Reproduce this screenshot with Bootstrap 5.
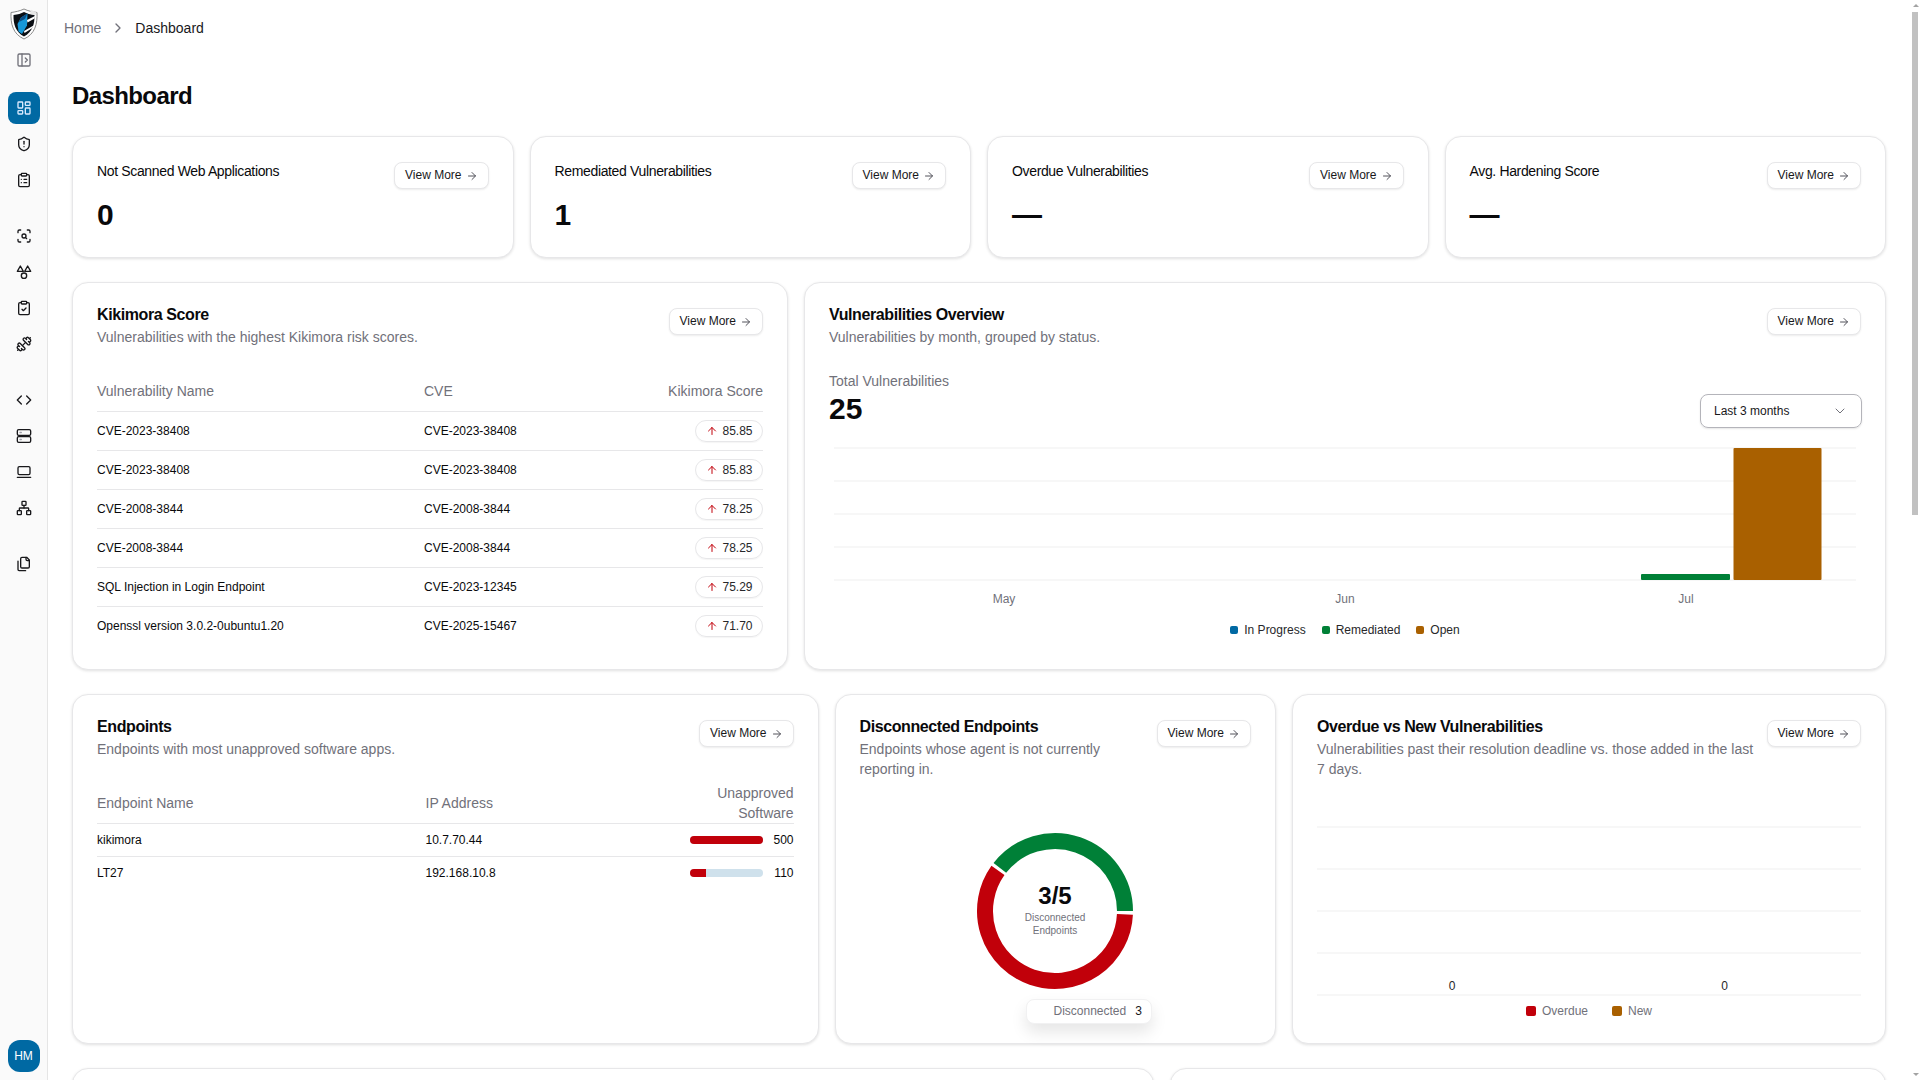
<!DOCTYPE html>
<html lang="en">
<head>
<meta charset="utf-8">
<title>Dashboard</title>
<link href="https://cdn.jsdelivr.net/npm/bootstrap@5.3.0/dist/css/bootstrap.min.css" rel="stylesheet">
<style>
html,body{height:100%;overflow:hidden}
body{font-family:"Liberation Sans",Arial,sans-serif;color:#09090b;background:#fff;font-size:14px;line-height:20px}
.ico{width:16px;height:16px;fill:none;stroke:currentColor;stroke-width:2;stroke-linecap:round;stroke-linejoin:round;flex:none}
.ico12{width:12px;height:12px}
.sidebar{width:48px;flex:none;background:#fafafa;border-right:1px solid #e5e5e5;height:100vh}
.logo{height:44px;padding-top:4px}
.nav-ico{width:32px;height:32px;color:#18181b;border-radius:8px}
.nav-ico.toggle{color:#71717a;margin-bottom:16px}
.nav-ico.active{background:#0069a3;color:#dbeafe}
.nav-group{margin-bottom:24px;gap:4px}
.avatar{width:32px;height:32px;background:#0069a3;color:#fff;font-size:12px;margin-bottom:8px;border-radius:12px}
.main{min-width:0;height:100vh;overflow:hidden;padding:0 19px 0 24px}
.crumbs{height:56px;margin-left:-8px;gap:9px;color:#71717a}
.crumbs .breadcrumb-item+.breadcrumb-item{padding:0}
.crumbs .breadcrumb-item+.breadcrumb-item::before{content:none}
.crumbs .current{color:#18181b}
h1.page-title{font-size:24px;line-height:32px;font-weight:700;letter-spacing:-.025em;margin:24px 0 24px}
.card.panel{border:1px solid #e7e7e9;border-radius:16px;box-shadow:0 1px 3px rgba(0,0,0,.12);--bs-card-bg:#fff}
.panel .card-body{padding:24px}
.h-stat{height:122px}.h-r2{height:388px}.h-r3{height:350px}.h-r4{height:240px}
.col-40{flex:0 0 auto;width:40%}.col-60{flex:0 0 auto;width:60%}
.stat-title{letter-spacing:-.025em}
.stat-value{font-size:30px;line-height:36px;font-weight:700;margin-top:16px}
.btn-more{--bs-btn-padding-x:10px;--bs-btn-padding-y:0;--bs-btn-font-size:12px;--bs-btn-line-height:25px;--bs-btn-border-color:#e7e7e9;--bs-btn-border-radius:8px;--bs-btn-color:#18181b;--bs-btn-bg:#fff;box-shadow:0 1px 2px rgba(0,0,0,.08);gap:4px;flex:none;white-space:nowrap;margin-top:1px}
.btn-more .ico{color:#52525b}
.panel-title{font-size:16px;line-height:15px;font-weight:700;letter-spacing:-.025em;margin:0 0 5px}
.panel-sub{color:#71717a;margin:0;font-size:14px;line-height:20px}
.tbl{margin:24px 0 0;table-layout:fixed;--bs-table-border-color:#e7e7e9;font-size:12px;line-height:16px}
.tbl th{font-weight:400;color:#71717a;font-size:14px;line-height:20px;height:40px;padding:0;vertical-align:middle}
.tbl td{padding:8px 0;vertical-align:middle;color:#09090b}
.tbl tr:last-child td{border-bottom:0}
.tbl-a .c1{width:327px}.tbl-a .c3{width:110px}
.tbl-b .c1{width:328.500px}.tbl-b .c3{width:104px}
.score{height:22px;line-height:20px;padding:0 9.500px;border:1px solid #e7e7e9;border-radius:11px;gap:4.500px;box-shadow:0 1px 1px rgba(0,0,0,.04);color:#27272a}
.score .ico{color:#c1000a}
.bar{width:73px;height:8px;--bs-progress-bg:#cfe1ec;--bs-progress-bar-bg:#c1000a;--bs-progress-border-radius:4px;flex:none}
.bar-row{gap:10px;white-space:nowrap}
.bar-num{flex:none;width:21px;text-align:right}
.total-label{color:#71717a;line-height:20px}
.total-num{font-size:30px;line-height:36px;font-weight:700}
.range{width:162px;height:34px;padding:0 13px;border:1px solid #b4b4ba;border-radius:8px;font-size:12px;box-shadow:0 1px 2px rgba(0,0,0,.1);color:#18181b;margin:0 -1px -1px 0}
.range .ico{color:#71717a;stroke-width:1.500}
.legend{font-size:12px;line-height:16px;color:#27272a}
.legend i{display:block;border-radius:2px;margin-right:6px}
.legend-a{gap:16px;margin-top:7px}
.legend-a i{width:8px;height:8px}
.legend-b{gap:24px;color:#71717a;margin-top:3px}
.legend-b i{width:10px;height:10px}
.chart-main{margin-top:1px}
.c-blue{background:#0069a3}.c-green{background:#008037}.c-orange{background:#a96000}.c-red{background:#c1000a}
svg text{font-family:"Liberation Sans",Arial,sans-serif}
.grid line{stroke:#f4f4f5;stroke-width:1.5}
.axis{font-size:12px;fill:#71717a;text-anchor:middle}
.val{font-size:12px;fill:#27272a;text-anchor:middle}
.donut{width:160px;height:160px;margin-top:52px}
.donut path{fill:none;stroke-width:16}
.donut-big{font-size:24px;font-weight:700;fill:#09090b;text-anchor:middle}
.donut-small{font-size:10px;fill:#71717a;text-anchor:middle}
.chart-tip{position:absolute;left:190px;top:304px;width:126px;height:25px;background:#fff;border:1px solid #f1f1f2;border-radius:8px;box-shadow:0 8px 16px rgba(0,0,0,.1);font-size:12px;line-height:23px;padding-left:27px;gap:9px;color:#71717a}
.chart-tip b{font-weight:400;color:#18181b}
.scrollbar{width:15px;flex:none;height:100vh;background:#fff;padding-top:4px}
.scroll-up,.scroll-down{width:0;height:0;margin-left:7.500px;border-left:3px solid transparent;border-right:3px solid transparent}
.scroll-up{border-bottom:3px solid #a3a3a3}
.scroll-thumb{width:6px;height:503px;margin:5px 0 0 7px;background:#c1c1c1}
.scroll-down{border-top:3px solid #a3a3a3;margin-top:auto;margin-bottom:4px}
</style>
</head>
<body class="d-flex">
<svg width="0" height="0" class="position-absolute">
<defs>
<symbol id="i-right" viewBox="0 0 24 24"><path d="M5 12h14"/><path d="m12 5 7 7-7 7"/></symbol>
<symbol id="i-up" viewBox="0 0 24 24"><path d="m5 12 7-7 7 7"/><path d="M12 19V5"/></symbol>
</defs>
</svg>

<aside class="sidebar d-flex flex-column align-items-center">
  <div class="logo d-flex align-items-center justify-content-center">
    <svg width="28" height="32" viewBox="0 0 28 32">
      <path d="M14 1C18 3 23 4 27 4.500C27.500 16 25 26 14 31C3 26 .5 16 1 4.500C5 4 10 3 14 1Z" fill="#fff" stroke="#8a8a8a" stroke-width="1"/>
      <path d="M14 4C17 5.500 20 6.500 24.500 7C24.800 16 22.500 24 14 28.500C5.500 24 3.200 16 3.500 7C8 6.500 11 5.500 14 4Z" fill="#0b0f14"/>
      <path d="M17.500 5.500L11 9.500L7.500 16L8.500 23.500L12 26L17 17.500Z" fill="#1798d8"/>
      <path d="M17.500 5.500L11 9.500L9 14L15 11Z" fill="#0d4f86"/>
      <path d="M17 12L25 8L24.500 10.500L17.500 14.500Z" fill="#fff"/>
      <path d="M21 1.800L26.500 4.500L25.500 7L20 6Z" fill="#e6e6e6"/>
      <path d="M14 23L23.500 17.500L22.500 20L14.500 25Z" fill="#fff"/>
    </svg>
  </div>
  <a class="nav-ico toggle d-flex align-items-center justify-content-center"><svg class="ico" viewBox="0 0 24 24"><rect width="18" height="18" x="3" y="3" rx="2"/><path d="M9 3v18"/><path d="m14 9 3 3-3 3"/></svg></a>
  <div class="nav-group d-flex flex-column">
    <a class="nav-ico active d-flex align-items-center justify-content-center"><svg class="ico" viewBox="0 0 24 24"><rect width="7" height="9" x="3" y="3" rx="1"/><rect width="7" height="5" x="14" y="3" rx="1"/><rect width="7" height="9" x="14" y="12" rx="1"/><rect width="7" height="5" x="3" y="16" rx="1"/></svg></a>
    <a class="nav-ico d-flex align-items-center justify-content-center"><svg class="ico" viewBox="0 0 24 24"><path d="M20 13c0 5-3.500 7.500-7.660 8.950a1 1 0 0 1-.67-.01C7.500 20.500 4 18 4 13V6a1 1 0 0 1 1-1c2 0 4.500-1.200 6.240-2.720a1.170 1.170 0 0 1 1.520 0C14.510 3.810 17 5 19 5a1 1 0 0 1 1 1z"/><path d="M12 8v4"/><path d="M12 16h.01"/></svg></a>
    <a class="nav-ico d-flex align-items-center justify-content-center"><svg class="ico" viewBox="0 0 24 24"><rect width="8" height="4" x="8" y="2" rx="1" ry="1"/><path d="M16 4h2a2 2 0 0 1 2 2v14a2 2 0 0 1-2 2H6a2 2 0 0 1-2-2V6a2 2 0 0 1 2-2h2"/><path d="M12 11h4"/><path d="M12 16h4"/><path d="M8 11h.01"/><path d="M8 16h.01"/></svg></a>
  </div>
  <div class="nav-group d-flex flex-column">
    <a class="nav-ico d-flex align-items-center justify-content-center"><svg class="ico" viewBox="0 0 24 24"><path d="M3 7V5a2 2 0 0 1 2-2h2"/><path d="M17 3h2a2 2 0 0 1 2 2v2"/><path d="M21 17v2a2 2 0 0 1-2 2h-2"/><path d="M7 21H5a2 2 0 0 1-2-2v-2"/><circle cx="12" cy="12" r="3"/><path d="m16 16-1.900-1.900"/></svg></a>
    <a class="nav-ico d-flex align-items-center justify-content-center"><svg class="ico" viewBox="0 0 24 24"><path d="M6.500 3 11 11H2Z"/><path d="M17.500 3 22 11H13Z"/><circle cx="12" cy="17.500" r="4"/></svg></a>
    <a class="nav-ico d-flex align-items-center justify-content-center"><svg class="ico" viewBox="0 0 24 24"><rect width="8" height="4" x="8" y="2" rx="1" ry="1"/><path d="M16 4h2a2 2 0 0 1 2 2v14a2 2 0 0 1-2 2H6a2 2 0 0 1-2-2V6a2 2 0 0 1 2-2h2"/><path d="m9 14 2 2 4-4"/></svg></a>
    <a class="nav-ico d-flex align-items-center justify-content-center"><svg class="ico" viewBox="0 0 24 24"><path d="M17.596 12.768a2 2 0 1 0 2.829-2.829l-1.768-1.767a2 2 0 1 0 2.828-2.829l-2.828-2.828a2 2 0 0 0-2.829 2.828l-1.767-1.768a2 2 0 1 0-2.829 2.829z"/><path d="m2.500 21.500 1.400-1.400"/><path d="m20.100 3.900 1.400-1.400"/><path d="M5.343 21.485a2 2 0 1 0 2.829-2.828l1.767 1.768a2 2 0 1 0 2.829-2.829l-6.364-6.364a2 2 0 1 0-2.829 2.829l1.768 1.767a2 2 0 0 0-2.828 2.829z"/><path d="m9.600 14.400 4.800-4.800"/></svg></a>
  </div>
  <div class="nav-group d-flex flex-column">
    <a class="nav-ico d-flex align-items-center justify-content-center"><svg class="ico" viewBox="0 0 24 24"><path d="m16 18 6-6-6-6"/><path d="m8 6-6 6 6 6"/></svg></a>
    <a class="nav-ico d-flex align-items-center justify-content-center"><svg class="ico" viewBox="0 0 24 24"><rect width="20" height="8.500" x="2" y="2.500" rx="2" ry="2"/><rect width="20" height="8.500" x="2" y="13" rx="2" ry="2"/><path d="M6 6.750h2" stroke="#a1a1aa"/><path d="M6 17.250h2" stroke="#a1a1aa"/></svg></a>
    <a class="nav-ico d-flex align-items-center justify-content-center"><svg class="ico" viewBox="0 0 24 24"><rect width="18" height="12" x="3" y="4" rx="2" ry="2"/><path d="M2 20h20"/></svg></a>
    <a class="nav-ico d-flex align-items-center justify-content-center"><svg class="ico" viewBox="0 0 24 24"><rect x="16" y="16" width="6" height="6" rx="1"/><rect x="2" y="16" width="6" height="6" rx="1"/><rect x="9" y="2" width="6" height="6" rx="1"/><path d="M5 16v-3a1 1 0 0 1 1-1h12a1 1 0 0 1 1 1v3"/><path d="M12 12V8"/></svg></a>
  </div>
  <div class="nav-group d-flex flex-column">
    <a class="nav-ico d-flex align-items-center justify-content-center"><svg class="ico" viewBox="0 0 24 24"><path d="M20 7h-3a2 2 0 0 1-2-2V2"/><path d="M9 18a2 2 0 0 1-2-2V4a2 2 0 0 1 2-2h7l4 4v10a2 2 0 0 1-2 2Z"/><path d="M3 7.600v12.800A1.600 1.600 0 0 0 4.600 22h9.800"/></svg></a>
  </div>
  <div class="avatar d-flex align-items-center justify-content-center mt-auto">HM</div>
</aside>

<main class="main flex-grow-1">
  <nav>
    <ol class="breadcrumb crumbs mb-0 d-flex align-items-center">
      <li class="breadcrumb-item">Home</li>
      <li class="d-flex align-items-center"><svg class="ico" viewBox="0 0 24 24"><path d="m9 18 6-6-6-6"/></svg></li>
      <li class="breadcrumb-item current">Dashboard</li>
    </ol>
  </nav>
  <h1 class="page-title">Dashboard</h1>

  <div class="row gx-3 mb-4">
    <div class="col-3"><div class="card panel h-stat"><div class="card-body d-flex justify-content-between">
      <div><div class="stat-title">Not Scanned Web Applications</div><div class="stat-value">0</div></div>
      <a class="btn btn-more d-inline-flex align-items-center align-self-start">View More <svg class="ico ico12"><use href="#i-right"/></svg></a>
    </div></div></div>
    <div class="col-3"><div class="card panel h-stat"><div class="card-body d-flex justify-content-between">
      <div><div class="stat-title">Remediated Vulnerabilities</div><div class="stat-value">1</div></div>
      <a class="btn btn-more d-inline-flex align-items-center align-self-start">View More <svg class="ico ico12"><use href="#i-right"/></svg></a>
    </div></div></div>
    <div class="col-3"><div class="card panel h-stat"><div class="card-body d-flex justify-content-between">
      <div><div class="stat-title">Overdue Vulnerabilities</div><div class="stat-value">—</div></div>
      <a class="btn btn-more d-inline-flex align-items-center align-self-start">View More <svg class="ico ico12"><use href="#i-right"/></svg></a>
    </div></div></div>
    <div class="col-3"><div class="card panel h-stat"><div class="card-body d-flex justify-content-between">
      <div><div class="stat-title">Avg. Hardening Score</div><div class="stat-value">—</div></div>
      <a class="btn btn-more d-inline-flex align-items-center align-self-start">View More <svg class="ico ico12"><use href="#i-right"/></svg></a>
    </div></div></div>
  </div>

  <div class="row gx-3 mb-4">
    <div class="col-40"><div class="card panel h-r2"><div class="card-body">
      <div class="d-flex justify-content-between gap-2">
        <div><h2 class="panel-title">Kikimora Score</h2><p class="panel-sub">Vulnerabilities with the highest Kikimora risk scores.</p></div>
        <a class="btn btn-more d-inline-flex align-items-center align-self-start">View More <svg class="ico ico12"><use href="#i-right"/></svg></a>
      </div>
      <table class="table tbl tbl-a">
        <thead><tr><th class="c1">Vulnerability Name</th><th>CVE</th><th class="c3 text-end">Kikimora Score</th></tr></thead>
        <tbody>
          <tr><td>CVE-2023-38408</td><td>CVE-2023-38408</td><td class="text-end"><span class="score d-inline-flex align-items-center"><svg class="ico ico12"><use href="#i-up"/></svg>85.85</span></td></tr>
          <tr><td>CVE-2023-38408</td><td>CVE-2023-38408</td><td class="text-end"><span class="score d-inline-flex align-items-center"><svg class="ico ico12"><use href="#i-up"/></svg>85.83</span></td></tr>
          <tr><td>CVE-2008-3844</td><td>CVE-2008-3844</td><td class="text-end"><span class="score d-inline-flex align-items-center"><svg class="ico ico12"><use href="#i-up"/></svg>78.25</span></td></tr>
          <tr><td>CVE-2008-3844</td><td>CVE-2008-3844</td><td class="text-end"><span class="score d-inline-flex align-items-center"><svg class="ico ico12"><use href="#i-up"/></svg>78.25</span></td></tr>
          <tr><td>SQL Injection in Login Endpoint</td><td>CVE-2023-12345</td><td class="text-end"><span class="score d-inline-flex align-items-center"><svg class="ico ico12"><use href="#i-up"/></svg>75.29</span></td></tr>
          <tr><td>Openssl version 3.0.2-0ubuntu1.20</td><td>CVE-2025-15467</td><td class="text-end"><span class="score d-inline-flex align-items-center"><svg class="ico ico12"><use href="#i-up"/></svg>71.70</span></td></tr>
        </tbody>
      </table>
    </div></div></div>
    <div class="col-60"><div class="card panel h-r2"><div class="card-body">
      <div class="d-flex justify-content-between gap-2">
        <div><h2 class="panel-title">Vulnerabilities Overview</h2><p class="panel-sub">Vulnerabilities by month, grouped by status.</p></div>
        <a class="btn btn-more d-inline-flex align-items-center align-self-start">View More <svg class="ico ico12"><use href="#i-right"/></svg></a>
      </div>
      <div class="d-flex justify-content-between align-items-end mt-4">
        <div><div class="total-label">Total Vulnerabilities</div><div class="total-num">25</div></div>
        <div class="range d-flex align-items-center justify-content-between">Last 3 months <svg class="ico" viewBox="0 0 24 24"><path d="m6 9 6 6 6-6"/></svg></div>
      </div>
      <svg class="d-block chart-main" width="1032" height="187" viewBox="0 0 1032 187">
        <g class="grid"><line x1="5" x2="1027" y1="20" y2="20"/><line x1="5" x2="1027" y1="53" y2="53"/><line x1="5" x2="1027" y1="86" y2="86"/><line x1="5" x2="1027" y1="119" y2="119"/><line x1="5" x2="1027" y1="152" y2="152"/></g>
        <rect x="812" y="146" width="89" height="6" rx="1" fill="#008037"/>
        <rect x="904.500" y="20" width="88" height="132" rx="1" fill="#a96000"/>
        <text class="axis" x="175" y="175">May</text><text class="axis" x="516" y="175">Jun</text><text class="axis" x="857" y="175">Jul</text>
      </svg>
      <div class="legend legend-a d-flex justify-content-center">
        <span class="d-flex align-items-center"><i class="c-blue"></i>In Progress</span>
        <span class="d-flex align-items-center"><i class="c-green"></i>Remediated</span>
        <span class="d-flex align-items-center"><i class="c-orange"></i>Open</span>
      </div>
    </div></div></div>
  </div>

  <div class="row gx-3 mb-4">
    <div class="col-5"><div class="card panel h-r3"><div class="card-body">
      <div class="d-flex justify-content-between gap-2">
        <div><h2 class="panel-title">Endpoints</h2><p class="panel-sub">Endpoints with most unapproved software apps.</p></div>
        <a class="btn btn-more d-inline-flex align-items-center align-self-start">View More <svg class="ico ico12"><use href="#i-right"/></svg></a>
      </div>
      <table class="table tbl tbl-b">
        <thead><tr><th class="c1">Endpoint Name</th><th>IP Address</th><th class="c3 text-end">Unapproved Software</th></tr></thead>
        <tbody>
          <tr><td>kikimora</td><td>10.7.70.44</td><td><div class="bar-row d-flex align-items-center"><div class="progress bar"><div class="progress-bar" style="width:100%"></div></div><span class="bar-num">500</span></div></td></tr>
          <tr><td>LT27</td><td>192.168.10.8</td><td><div class="bar-row d-flex align-items-center"><div class="progress bar"><div class="progress-bar" style="width:22%"></div></div><span class="bar-num">110</span></div></td></tr>
        </tbody>
      </table>
    </div></div></div>
    <div class="col-3"><div class="card panel h-r3"><div class="card-body">
      <div class="d-flex justify-content-between gap-2">
        <div><h2 class="panel-title">Disconnected Endpoints</h2><p class="panel-sub">Endpoints whose agent is not currently reporting in.</p></div>
        <a class="btn btn-more d-inline-flex align-items-center align-self-start">View More <svg class="ico ico12"><use href="#i-right"/></svg></a>
      </div>
      <svg class="donut d-block mx-auto" viewBox="0 0 160 160">
        <path d="M150 80A70 70 0 0 0 24.840 36.900" stroke="#008037"/>
        <path d="M22.950 39.470A70 70 0 1 0 149.920 83.300" stroke="#c1000a"/>
        <text class="donut-big" x="80" y="73">3/5</text>
        <text class="donut-small" x="80" y="90">Disconnected</text>
        <text class="donut-small" x="80" y="103">Endpoints</text>
      </svg>
      <div class="chart-tip d-flex">Disconnected <b>3</b></div>
    </div></div></div>
    <div class="col-4"><div class="card panel h-r3"><div class="card-body">
      <div class="d-flex justify-content-between gap-2">
        <div><h2 class="panel-title">Overdue vs New Vulnerabilities</h2><p class="panel-sub">Vulnerabilities past their resolution deadline vs. those added in the last 7 days.</p></div>
        <a class="btn btn-more d-inline-flex align-items-center align-self-start">View More <svg class="ico ico12"><use href="#i-right"/></svg></a>
      </div>
      <svg class="d-block mt-2" width="544" height="213" viewBox="0 0 544 213">
        <g class="grid"><line x1="0" x2="544" y1="40" y2="40"/><line x1="0" x2="544" y1="82" y2="82"/><line x1="0" x2="544" y1="124" y2="124"/><line x1="0" x2="544" y1="166" y2="166"/><line x1="0" x2="544" y1="208" y2="208"/></g>
        <text class="val" x="135" y="203">0</text><text class="val" x="407.500" y="203">0</text>
      </svg>
      <div class="legend legend-b d-flex justify-content-center">
        <span class="d-flex align-items-center"><i class="c-red"></i>Overdue</span>
        <span class="d-flex align-items-center"><i class="c-orange"></i>New</span>
      </div>
    </div></div></div>
  </div>

  <div class="row gx-3">
    <div class="col-60"><div class="card panel h-r4"></div></div>
    <div class="col-40"><div class="card panel h-r4"></div></div>
  </div>
</main>

<div class="scrollbar d-flex flex-column">
  <div class="scroll-up"></div>
  <div class="scroll-thumb"></div>
  <div class="scroll-down"></div>
</div>
<script src="https://cdn.jsdelivr.net/npm/bootstrap@5.3.0/dist/js/bootstrap.bundle.min.js"></script>
</body>
</html>
